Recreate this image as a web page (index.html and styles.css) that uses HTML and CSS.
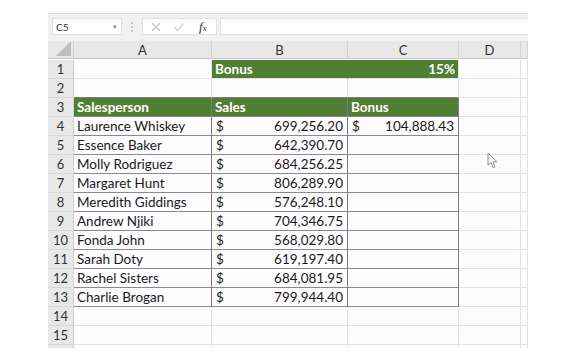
FILE: index.html
```html
<!DOCTYPE html>
<html>
<head>
<meta charset="utf-8">
<link rel="stylesheet" href="styles.css">
</head>
<body>
<div class="app">
  <div class="toolbar">
    <div class="namebox"><span>C5</span><span class="drop">▾</span></div>
    <div class="sep"><i></i><i></i><i></i></div>
    <div class="fxbox">
      <svg class="ic" width="12" height="12" viewBox="0 0 12 12"><path d="M2 2 L10 10 M10 2 L2 10" stroke="#c4c4c4" stroke-width="1.1" fill="none"/></svg>
      <svg class="ic" width="12" height="12" viewBox="0 0 12 12"><path d="M1.5 6.5 L4.5 9.5 L10.5 2.5" stroke="#c4c4c4" stroke-width="1.1" fill="none"/></svg>
      <span class="fx">f<sub>x</sub></span>
    </div>
    <div class="formula"></div>
  </div>
  <div class="grid">
    <div class="ch corner"><span class="tri"></span></div><div class="ch">A</div><div class="ch">B</div><div class="ch">C</div><div class="ch">D</div><div class="ch"></div>

    <div class="rh">1</div><div class="c"></div><div class="c g gm">Bonus</div><div class="c g r">15%</div><div class="c"></div><div class="c"></div>
    <div class="rh">2</div><div class="c db"></div><div class="c db"></div><div class="c db"></div><div class="c"></div><div class="c"></div>
    <div class="rh">3</div><div class="c g bd">Salesperson</div><div class="c g bd">Sales</div><div class="c g bd">Bonus</div><div class="c"></div><div class="c"></div>

    <div class="rh">4</div><div class="c bd">Laurence Whiskey</div><div class="c bd num"><span>$</span><span>699,256.20</span></div><div class="c bd num"><span>$</span><span>104,888.43</span></div><div class="c"></div><div class="c"></div>
    <div class="rh">5</div><div class="c bd">Essence Baker</div><div class="c bd num"><span>$</span><span>642,390.70</span></div><div class="c bd"></div><div class="c"></div><div class="c"></div>
    <div class="rh">6</div><div class="c bd">Molly Rodriguez</div><div class="c bd num"><span>$</span><span>684,256.25</span></div><div class="c bd"></div><div class="c"></div><div class="c"></div>
    <div class="rh">7</div><div class="c bd">Margaret Hunt</div><div class="c bd num"><span>$</span><span>806,289.90</span></div><div class="c bd"></div><div class="c"></div><div class="c"></div>
    <div class="rh">8</div><div class="c bd">Meredith Giddings</div><div class="c bd num"><span>$</span><span>576,248.10</span></div><div class="c bd"></div><div class="c"></div><div class="c"></div>
    <div class="rh">9</div><div class="c bd">Andrew Njiki</div><div class="c bd num"><span>$</span><span>704,346.75</span></div><div class="c bd"></div><div class="c"></div><div class="c"></div>
    <div class="rh">10</div><div class="c bd">Fonda John</div><div class="c bd num"><span>$</span><span>568,029.80</span></div><div class="c bd"></div><div class="c"></div><div class="c"></div>
    <div class="rh">11</div><div class="c bd">Sarah Doty</div><div class="c bd num"><span>$</span><span>619,197.40</span></div><div class="c bd"></div><div class="c"></div><div class="c"></div>
    <div class="rh">12</div><div class="c bd">Rachel Sisters</div><div class="c bd num"><span>$</span><span>684,081.95</span></div><div class="c bd"></div><div class="c"></div><div class="c"></div>
    <div class="rh">13</div><div class="c bd">Charlie Brogan</div><div class="c bd num"><span>$</span><span>799,944.40</span></div><div class="c bd"></div><div class="c"></div><div class="c"></div>

    <div class="rh">14</div><div class="c"></div><div class="c"></div><div class="c"></div><div class="c"></div><div class="c"></div>
    <div class="rh">15</div><div class="c"></div><div class="c"></div><div class="c"></div><div class="c"></div><div class="c"></div>
    <div class="rh stub"></div><div class="c stub"></div><div class="c stub"></div><div class="c stub"></div><div class="c stub"></div><div class="c stub"></div>
  </div>
  <svg class="cursor" width="12" height="18" viewBox="0 0 12 18"><path d="M1 1 L1 13 L4 10.5 L6.2 15.5 L8 14.7 L5.9 9.8 L10 9.8 Z" fill="#fff" stroke="#8a8a8a" stroke-width="1"/></svg>
</div>
</body>
</html>
```
FILE: styles.css
```css
html, body {
  margin: 0;
  padding: 0;
  background: #ffffff;
}
.app {
  position: relative;
  padding: 13px 0 0 48px;
  width: 480px;
  font-family: "Lato", "Open Sans", sans-serif;
}
.toolbar {
  display: flex;
  align-items: flex-start;
  height: 28px;
  box-sizing: border-box;
  padding-top: 4px;
  background: #f1f1f1;
  border-top: 1px solid #dcdcdc;
}
.namebox {
  margin-left: 4px;
  width: 70px;
  height: 17px;
  box-sizing: border-box;
  background: #fff;
  border: 1px solid #e0e0e0;
  display: flex;
  justify-content: space-between;
  align-items: center;
  padding: 0 4px 0 3px;
  font-size: 10px;
  color: #333;
}
.drop {
  font-size: 7px;
  color: #888;
}
.sep {
  width: 20px;
  height: 17px;
  display: flex;
  flex-direction: column;
  align-items: center;
  justify-content: center;
  gap: 2px;
}
.sep i {
  width: 2px;
  height: 2px;
  background: #c6c6c6;
}
.fxbox {
  width: 75px;
  height: 17px;
  box-sizing: border-box;
  background: #fff;
  border: 1px solid #e0e0e0;
  display: flex;
  align-items: center;
  padding-left: 7px;
  gap: 11px;
}
.fx {
  font-family: "Liberation Serif", serif;
  font-style: italic;
  font-size: 13px;
  color: #333;
  margin-left: 3px;
}
.fx sub {
  font-size: 9px;
  vertical-align: baseline;
}
.formula {
  margin-left: 3px;
  flex: 1;
  height: 17px;
  background: #fff;
  border: 1px solid #e0e0e0;
  border-right: none;
  box-sizing: border-box;
}
.grid {
  display: grid;
  grid-template-columns: 26px 138px 136px 111px 62px 7px;
  grid-auto-rows: 19px;
  font-size: 13.5px;
  color: #1a1a1a;
}
.grid > div {
  box-sizing: border-box;
  border-right: 1px solid #e3e3e3;
  border-bottom: 1px solid #e3e3e3;
  white-space: nowrap;
  overflow: hidden;
  display: flex;
  align-items: center;
}
.ch {
  background: #e8e8e8;
  justify-content: center;
  color: #333;
  font-size: 13px;
  border-right-color: #d4d4d4 !important;
  border-bottom-color: #c8c8c8 !important;
}
.grid > .ch { height: 18px; }
.corner {
  position: relative;
}
.tri {
  position: absolute;
  right: 2px;
  bottom: 2px;
  width: 0;
  height: 0;
  border-left: 15px solid transparent;
  border-bottom: 15px solid #bdbdbd;
}
.rh {
  background: #e8e8e8;
  justify-content: center;
  color: #333;
  font-size: 13px;
  border-right-color: #cfcfcf !important;
  border-bottom-color: #d8d8d8 !important;
}
.c {
  background: #fdfcff;
  padding: 0 3px;
}
.g {
  background: #507e32;
  color: #fff;
  font-weight: 700;
}
.gm {
  border-right-color: #507e32 !important;
}
.r {
  justify-content: flex-end;
}
.bd {
  border-right-color: #7c7c7c !important;
  border-bottom-color: #8a8a8a !important;
}
.db {
  border-bottom-color: #7c7c7c !important;
}
.num {
  justify-content: space-between;
  padding: 0 4px 0 4px;
}
.stub {
  height: 3px;
  border-bottom: none !important;
}
.grid > .stub { max-height: 3px; }
.cursor {
  position: absolute;
  left: 487px;
  top: 152px;
}
```
